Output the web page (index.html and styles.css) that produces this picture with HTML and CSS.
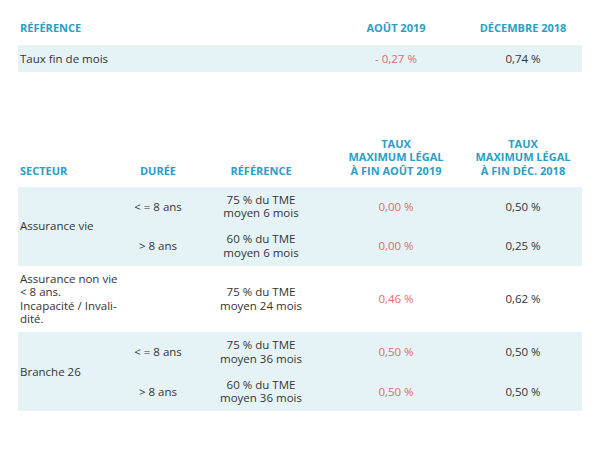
FILE: index.html
```html
<!DOCTYPE html>
<html lang="fr">
<head>
<meta charset="utf-8">
<link rel="stylesheet" href="styles.css">
</head>
<body>
<div class="page">
  <table class="rates rates-top">
    <colgroup><col class="c-wide"><col class="c-4"><col class="c-5"></colgroup>
    <thead>
      <tr><th class="left">Référence</th><th>Août 2019</th><th>Décembre 2018</th></tr>
    </thead>
    <tbody class="shaded">
      <tr><td class="left">Taux fin de mois</td><td class="neg">- 0,27 %</td><td>0,74 %</td></tr>
    </tbody>
  </table>

  <table class="rates rates-main">
    <colgroup><col class="c-1"><col class="c-2"><col class="c-3"><col class="c-4"><col class="c-5"></colgroup>
    <thead>
      <tr>
        <th class="left">Secteur</th>
        <th>Durée</th>
        <th>Référence</th>
        <th>Taux<br>maximum légal<br>à fin août 2019</th>
        <th>Taux<br>maximum légal<br>à fin déc. 2018</th>
      </tr>
    </thead>
    <tbody class="shaded">
      <tr><td class="left" rowspan="2">Assurance vie</td><td>&lt; = 8 ans</td><td>75 % du TME<br>moyen 6 mois</td><td class="neg">0,00 %</td><td>0,50 %</td></tr>
      <tr><td>&gt; 8 ans</td><td>60 % du TME<br>moyen 6 mois</td><td class="neg">0,00 %</td><td>0,25 %</td></tr>
    </tbody>
    <tbody>
      <tr><td class="left">Assurance non vie<br>&lt; 8 ans.<br>Incapacité / Invali&shy;dité.</td><td></td><td>75 % du TME<br>moyen 24 mois</td><td class="neg">0,46 %</td><td>0,62 %</td></tr>
    </tbody>
    <tbody class="shaded">
      <tr><td class="left" rowspan="2">Branche 26</td><td>&lt; = 8 ans</td><td>75 % du TME<br>moyen 36 mois</td><td class="neg">0,50 %</td><td>0,50 %</td></tr>
      <tr><td>&gt; 8 ans</td><td>60 % du TME<br>moyen 36 mois</td><td class="neg">0,50 %</td><td>0,50 %</td></tr>
    </tbody>
  </table>
</div>
</body>
</html>
```

FILE: styles.css
```css
html, body {
  margin: 0;
  padding: 0;
  background: #ffffff;
}
body {
  font-family: "Open Sans", "Liberation Sans", sans-serif;
  color: #333333;
  font-size: 11.5px;
}
.page {
  padding: 0 18px;
}
.rates {
  width: 564px;
  border-collapse: collapse;
  table-layout: fixed;
}
.c-wide { width: 310px; }
.c-1 { width: 104px; }
.c-2 { width: 72px; }
.c-3 { width: 134px; }
.c-4 { width: 136px; }
.c-5 { width: 118px; }

.rates th {
  font-size: 11px;
  font-weight: 700;
  text-transform: uppercase;
  color: #2a9ec4;
  text-align: center;
  vertical-align: bottom;
  padding: 0 2px;
}
.rates td {
  text-align: center;
  vertical-align: middle;
  line-height: 13.5px;
  padding: 6.25px 2px;
}
.rates .left {
  text-align: left;
}
.shaded {
  background: #e5f3f7;
}
.neg {
  color: #df6a6a;
}

.rates-top th {
  line-height: 16px;
  padding-top: 20px;
  padding-bottom: 9px;
}
.rates-top td {
  height: 27px;
  padding: 0 2px;
  box-sizing: border-box;
}

.rates-main {
  margin-top: 64.5px;
}
.rates-main th {
  line-height: 13.5px;
  padding-bottom: 9.5px;
}
```
